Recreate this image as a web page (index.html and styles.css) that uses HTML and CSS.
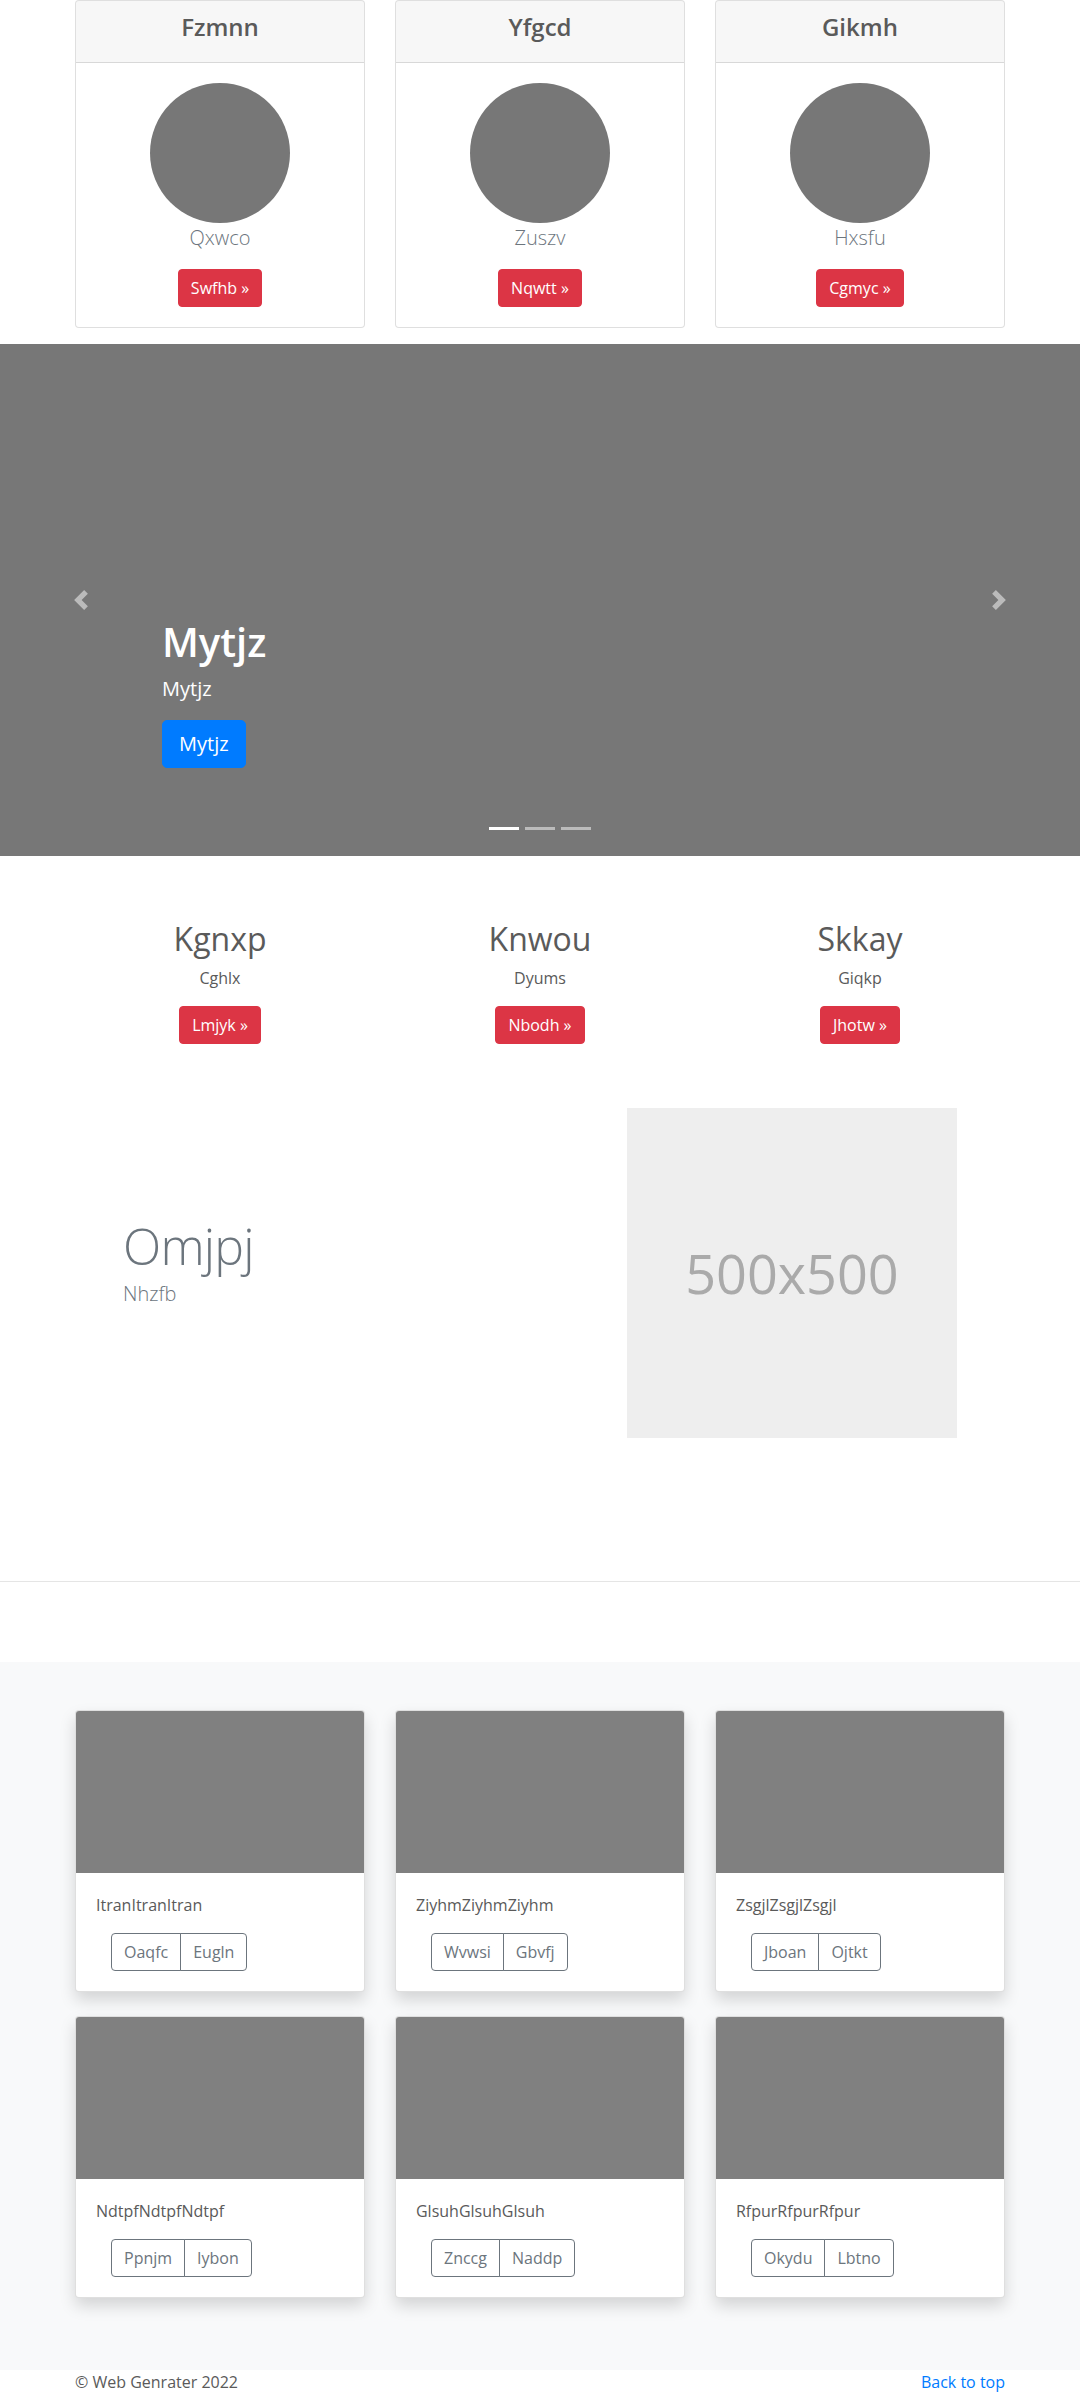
FILE: index.html
```html
<!DOCTYPE html>
<html lang="en">
<head>
<meta charset="utf-8">
<title>Page</title>
<link rel="stylesheet" href="styles.css">
</head>
<body>
<main>
  <div class="container">
    <div class="row">
      <div class="col-4">
        <div class="card">
          <div class="card-header"><h4 class="card-title">Fzmnn</h4></div>
          <div class="card-body center">
            <div class="avatar"></div>
            <p class="muted-lead">Qxwco</p>
            <a class="btn btn-danger" href="#">Swfhb »</a>
          </div>
        </div>
      </div>
      <div class="col-4">
        <div class="card">
          <div class="card-header"><h4 class="card-title">Yfgcd</h4></div>
          <div class="card-body center">
            <div class="avatar"></div>
            <p class="muted-lead">Zuszv</p>
            <a class="btn btn-danger" href="#">Nqwtt »</a>
          </div>
        </div>
      </div>
      <div class="col-4">
        <div class="card">
          <div class="card-header"><h4 class="card-title">Gikmh</h4></div>
          <div class="card-body center">
            <div class="avatar"></div>
            <p class="muted-lead">Hxsfu</p>
            <a class="btn btn-danger" href="#">Cgmyc »</a>
          </div>
        </div>
      </div>
    </div>
  </div>

  <div class="carousel">
    <ol class="carousel-indicators">
      <li class="active"></li>
      <li></li>
      <li></li>
    </ol>
    <a class="carousel-control prev" href="#">
      <svg class="control-icon" viewBox="0 0 8 8" width="20" height="20"><path d="M5.25 0l-4 4 4 4 1.5-1.5-2.5-2.5 2.5-2.5-1.5-1.5z"/></svg>
    </a>
    <a class="carousel-control next" href="#">
      <svg class="control-icon" viewBox="0 0 8 8" width="20" height="20"><path d="M2.75 0l-1.5 1.5 2.5 2.5-2.5 2.5 1.5 1.5 4-4-4-4z"/></svg>
    </a>
    <div class="carousel-caption">
      <h1 class="caption-title">Mytjz</h1>
      <p class="caption-text">Mytjz</p>
      <p class="caption-action"><a class="btn btn-lg btn-primary" href="#">Mytjz</a></p>
    </div>
  </div>

  <div class="container">
    <div class="row">
      <div class="col-4 marketing">
        <h2 class="marketing-title">Kgnxp</h2>
        <p class="marketing-text">Cghlx</p>
        <p class="marketing-action"><a class="btn btn-danger" href="#">Lmjyk »</a></p>
      </div>
      <div class="col-4 marketing">
        <h2 class="marketing-title">Knwou</h2>
        <p class="marketing-text">Dyums</p>
        <p class="marketing-action"><a class="btn btn-danger" href="#">Nbodh »</a></p>
      </div>
      <div class="col-4 marketing">
        <h2 class="marketing-title">Skkay</h2>
        <p class="marketing-text">Giqkp</p>
        <p class="marketing-action"><a class="btn btn-danger" href="#">Jhotw »</a></p>
      </div>
    </div>

    <div class="row featurette">
      <div class="col-7">
        <h2 class="featurette-heading">Omjpj</h2>
        <p class="featurette-lead">Nhzfb</p>
      </div>
      <div class="col-5">
        <div class="placeholder">500x500</div>
      </div>
    </div>
  </div>

  <hr class="divider">

  <div class="album">
    <div class="container">
      <div class="row wrap">
        <div class="col-4">
          <div class="card shadow">
            <div class="card-img"></div>
            <div class="card-body">
              <p class="card-text">ItranItranItran</p>
              <div class="btn-group">
                <a class="btn btn-outline" href="#">Oaqfc</a><a class="btn btn-outline" href="#">Eugln</a>
              </div>
            </div>
          </div>
        </div>
        <div class="col-4">
          <div class="card shadow">
            <div class="card-img"></div>
            <div class="card-body">
              <p class="card-text">ZiyhmZiyhmZiyhm</p>
              <div class="btn-group">
                <a class="btn btn-outline" href="#">Wvwsi</a><a class="btn btn-outline" href="#">Gbvfj</a>
              </div>
            </div>
          </div>
        </div>
        <div class="col-4">
          <div class="card shadow">
            <div class="card-img"></div>
            <div class="card-body">
              <p class="card-text">ZsgjlZsgjlZsgjl</p>
              <div class="btn-group">
                <a class="btn btn-outline" href="#">Jboan</a><a class="btn btn-outline" href="#">Ojtkt</a>
              </div>
            </div>
          </div>
        </div>
        <div class="col-4">
          <div class="card shadow">
            <div class="card-img"></div>
            <div class="card-body">
              <p class="card-text">NdtpfNdtpfNdtpf</p>
              <div class="btn-group">
                <a class="btn btn-outline" href="#">Ppnjm</a><a class="btn btn-outline" href="#">Iybon</a>
              </div>
            </div>
          </div>
        </div>
        <div class="col-4">
          <div class="card shadow">
            <div class="card-img"></div>
            <div class="card-body">
              <p class="card-text">GlsuhGlsuhGlsuh</p>
              <div class="btn-group">
                <a class="btn btn-outline" href="#">Znccg</a><a class="btn btn-outline" href="#">Naddp</a>
              </div>
            </div>
          </div>
        </div>
        <div class="col-4">
          <div class="card shadow">
            <div class="card-img"></div>
            <div class="card-body">
              <p class="card-text">RfpurRfpurRfpur</p>
              <div class="btn-group">
                <a class="btn btn-outline" href="#">Okydu</a><a class="btn btn-outline" href="#">Lbtno</a>
              </div>
            </div>
          </div>
        </div>
      </div>
    </div>
  </div>

  <footer class="container footer">
    <p class="copyright">© Web Genrater 2022</p>
    <p class="back"><a href="#">Back to top</a></p>
  </footer>
</main>
</body>
</html>
```

FILE: styles.css
```css
* { box-sizing: border-box; }

html, body {
  margin: 0;
  padding: 0;
}

body {
  font-family: "Open Sans", "Noto Sans", "Liberation Sans", sans-serif;
  font-size: 16px;
  line-height: 1.5;
  color: #5a5a5a;
  background: #fff;
}

a { text-decoration: none; }

.container {
  width: 960px;
  margin: 0 auto;
  padding: 0 15px;
}

.row {
  display: flex;
  margin: 0 -15px;
}

.row.wrap { flex-wrap: wrap; }

.col-4 {
  flex: 0 0 33.3333%;
  max-width: 33.3333%;
  padding: 0 15px;
}

.col-7 {
  flex: 0 0 58.3333%;
  max-width: 58.3333%;
  padding: 0 15px;
}

.col-5 {
  flex: 0 0 41.6667%;
  max-width: 41.6667%;
  padding: 0 15px;
}

.center { text-align: center; }

/* cards */
.card {
  background: #fff;
  border: 1px solid rgba(0,0,0,.125);
  border-radius: 4px;
  margin-bottom: 16px;
}

.card-header {
  background: rgba(0,0,0,.03);
  border-bottom: 1px solid rgba(0,0,0,.125);
  padding: 12px 20px;
  text-align: center;
  border-radius: 3px 3px 0 0;
}

.card-title {
  margin: 0 0 8px;
  font-size: 24px;
  line-height: 1.2;
  font-weight: 600;
}

.card-body { padding: 20px; }

.avatar {
  width: 140px;
  height: 140px;
  border-radius: 50%;
  background: #777;
  margin: 0 auto;
}

.muted-lead {
  margin: 0 0 16px;
  font-size: 20px;
  font-weight: 300;
  color: #6c757d;
}

/* buttons */
.btn {
  display: inline-block;
  padding: 6px 12px;
  font-size: 16px;
  line-height: 1.5;
  border: 1px solid transparent;
  border-radius: 4px;
  vertical-align: middle;
}

.btn-danger {
  background: #dc3545;
  border-color: #dc3545;
  color: #fff;
}

.btn-primary {
  background: #007bff;
  border-color: #007bff;
  color: #fff;
}

.btn-lg {
  padding: 8px 16px;
  font-size: 20px;
  line-height: 1.5;
  border-radius: 5px;
}

.btn-outline {
  color: #6c757d;
  border-color: #6c757d;
  background: transparent;
}

.btn-group {
  display: inline-flex;
  margin-left: 15px;
}

.btn-group .btn:first-child {
  border-top-right-radius: 0;
  border-bottom-right-radius: 0;
}

.btn-group .btn + .btn {
  margin-left: -1px;
  border-top-left-radius: 0;
  border-bottom-left-radius: 0;
}

/* carousel */
.carousel {
  position: relative;
  height: 512px;
  background: #777;
  margin-bottom: 64px;
}

.carousel-indicators {
  position: absolute;
  left: 0;
  right: 0;
  bottom: 10px;
  display: flex;
  justify-content: center;
  list-style: none;
  padding: 0;
  margin: 0 15% 16px;
}

.carousel-indicators li {
  width: 30px;
  height: 3px;
  margin: 0 3px;
  background: rgba(255,255,255,.5);
}

.carousel-indicators li.active { background: #fff; }

.carousel-control {
  position: absolute;
  top: 0;
  bottom: 0;
  width: 15%;
  display: flex;
  align-items: center;
  justify-content: center;
  opacity: .5;
}

.carousel-control.prev { left: 0; }
.carousel-control.next { right: 0; }

.control-icon { fill: #fff; display: block; }

.carousel-caption {
  position: absolute;
  left: 15%;
  right: 15%;
  bottom: 48px;
  padding: 20px 0;
  color: #fff;
  text-align: left;
}

.caption-title {
  margin: 0 0 8px;
  font-size: 40px;
  line-height: 1.2;
  font-weight: 600;
}

.caption-text {
  margin: 0 0 16px;
  font-size: 20px;
  line-height: 1.5;
}

.caption-action {
  display: flex;
  margin: 0 0 20px;
}

/* marketing */
.marketing { text-align: center; }

.marketing-title {
  margin: 0 0 8px;
  font-size: 32px;
  line-height: 1.2;
  font-weight: 400;
}

.marketing-text { margin: 0 12px 16px; }

.marketing-action { margin: 0 12px 16px; }

/* featurette */
.featurette {
  padding: 48px;
  align-items: center;
}

.featurette-heading {
  margin: 0 0 8px;
  font-size: 50px;
  line-height: 1;
  font-weight: 300;
  letter-spacing: -0.8px;
  color: #6c757d;
}

.featurette-lead {
  margin: 0 0 16px;
  font-size: 20px;
  font-weight: 300;
  color: #6c757d;
}

.placeholder {
  width: 330px;
  height: 330px;
  background: #eee;
  color: #aaa;
  font-size: 54px;
  display: flex;
  align-items: center;
  justify-content: center;
}

.divider {
  border: 0;
  border-top: 1px solid rgba(0,0,0,.1);
  margin: 95px 0 80px;
  height: 0;
}

/* album */
.album {
  background: #f8f9fa;
  padding: 48px 0;
}

.card.shadow {
  margin-bottom: 24px;
  box-shadow: 0 8px 16px rgba(0,0,0,.15);
  overflow: hidden;
}

.card-img {
  height: 162px;
  background: #808080;
}

.card-text { margin: 0 0 16px; }

/* footer */
.footer {
  display: flex;
  justify-content: space-between;
}

.footer p { margin: 0 0 16px; }

.back a { color: #007bff; }
```
